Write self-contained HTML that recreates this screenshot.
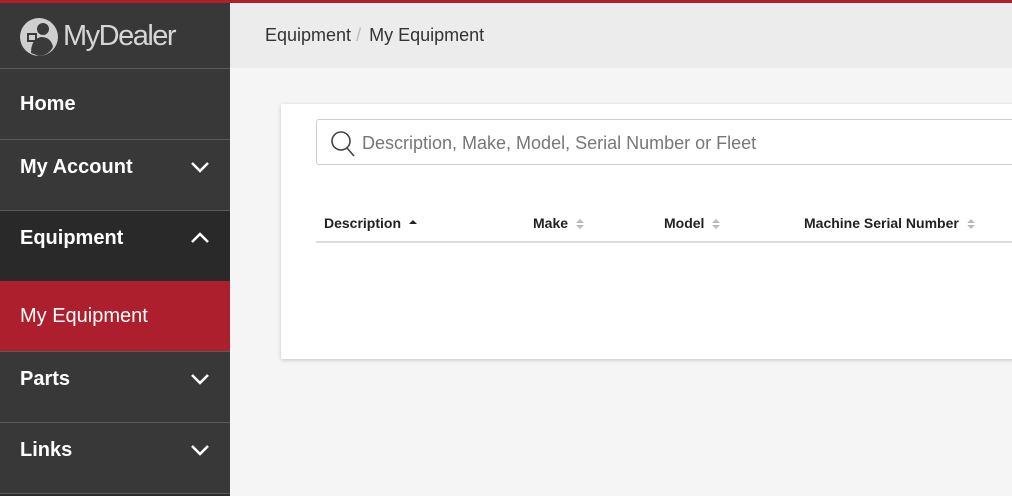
<!DOCTYPE html>
<html><head><meta charset="utf-8"><style>
*{margin:0;padding:0;box-sizing:border-box}
body{width:1012px;height:496px;overflow:hidden;background:#f5f5f5;font-family:"Liberation Sans",sans-serif;position:relative}
.top{position:absolute;left:0;top:0;width:1012px;height:3px;background:#b01f2c}
.side{position:absolute;left:0;top:3px;width:230px;height:493px;background:#2b2b2b}
.logo{height:66px;background:#383838;position:relative;border-bottom:1px solid #5a5a5a}
.logo span{position:absolute;left:63px;top:17px;font-size:29px;color:#d6d6d6;letter-spacing:-1.5px;font-weight:300}
.item{height:71px;background:#383838;border-bottom:1px solid #5a5a5a;position:relative;color:#fff;font-weight:bold;font-size:20px}
.item .t{position:absolute;left:20px;top:24px}
.item.dd .t{top:16px}
.item svg{position:absolute;left:190px;top:20px}
.eq{background:#292929;border-bottom:none;height:70px}
.red{background:#ad1f2d;font-weight:normal}
.hdr{position:absolute;left:230px;top:3px;width:782px;height:65px;background:#ececec;font-size:18px;color:#333}
.hdr .b{position:absolute;left:35px;top:22px}
.card{position:absolute;left:281px;top:104px;width:740px;height:255px;background:#fff;border-radius:2px;box-shadow:0 1px 4px rgba(0,0,0,.2)}
.search{position:absolute;left:35px;top:15px;width:720px;height:46px;border:1px solid #ccc;border-radius:3px}
.search span{position:absolute;left:45px;top:13px;font-size:18px;color:#777}
.th{position:absolute;top:111px;font-size:14px;font-weight:bold;color:#222}
.line{position:absolute;left:35px;top:137px;width:720px;height:2px;background:#ddd}
.ar{display:inline-block;margin-left:8px;vertical-align:middle}
</style></head><body>
<div class="top"></div>
<div class="side">
 <div class="logo">
  <svg width="40" height="40" viewBox="0 0 40 40" style="position:absolute;left:19px;top:14px"><circle cx="20" cy="20" r="19" fill="#cfcfcf"/><circle cx="24" cy="12" r="6" fill="#3a3a3a"/><path d="M12 36 Q12 22 22 20 Q32 20 34 30 Q30 38 20 39 Z" fill="#3a3a3a"/><rect x="9" y="17" width="8" height="7" fill="#cfcfcf" stroke="#3a3a3a" stroke-width="2"/></svg>
  <span>MyDealer</span>
 </div>
 <div class="item"><span class="t">Home</span></div>
 <div class="item dd"><span class="t">My Account</span><svg width="20" height="14" viewBox="0 0 20 14"><path d="M2 3 L10 11 L18 3" stroke="#fff" stroke-width="2.5" fill="none"/></svg></div>
 <div class="item dd eq"><span class="t">Equipment</span><svg width="20" height="14" viewBox="0 0 20 14"><path d="M2 11 L10 3 L18 11" stroke="#fff" stroke-width="2.5" fill="none"/></svg></div>
 <div class="item red"><span class="t">My Equipment</span></div>
 <div class="item dd"><span class="t">Parts</span><svg width="20" height="14" viewBox="0 0 20 14"><path d="M2 3 L10 11 L18 3" stroke="#fff" stroke-width="2.5" fill="none"/></svg></div>
 <div class="item dd"><span class="t">Links</span><svg width="20" height="14" viewBox="0 0 20 14"><path d="M2 3 L10 11 L18 3" stroke="#fff" stroke-width="2.5" fill="none"/></svg></div>
</div>
<div class="hdr"><span class="b">Equipment<span style="color:#bbb;margin:0 8px 0 5px">/</span>My Equipment</span></div>
<div class="card">
 <div class="search"><svg width="28" height="28" viewBox="0 0 28 28" style="position:absolute;left:12px;top:10px"><circle cx="12" cy="11" r="9" stroke="#444" stroke-width="1.6" fill="none"/><path d="M18 18 L25 26" stroke="#444" stroke-width="1.6"/></svg><span>Description, Make, Model, Serial Number or Fleet</span></div>
 <div class="th" style="left:43px">Description<svg class="ar" width="8" height="10"><path d="M0 5 L4 1 L8 5Z" fill="#222"/></svg></div>
 <div class="th" style="left:252px">Make<svg class="ar" width="8" height="12"><path d="M0 5 L4 1 L8 5Z M0 7 L4 11 L8 7Z" fill="#bbb"/></svg></div>
 <div class="th" style="left:383px">Model<svg class="ar" width="8" height="12"><path d="M0 5 L4 1 L8 5Z M0 7 L4 11 L8 7Z" fill="#bbb"/></svg></div>
 <div class="th" style="left:523px">Machine Serial Number<svg class="ar" width="8" height="12"><path d="M0 5 L4 1 L8 5Z M0 7 L4 11 L8 7Z" fill="#bbb"/></svg></div>
 <div class="line"></div>
</div>
</body></html>
